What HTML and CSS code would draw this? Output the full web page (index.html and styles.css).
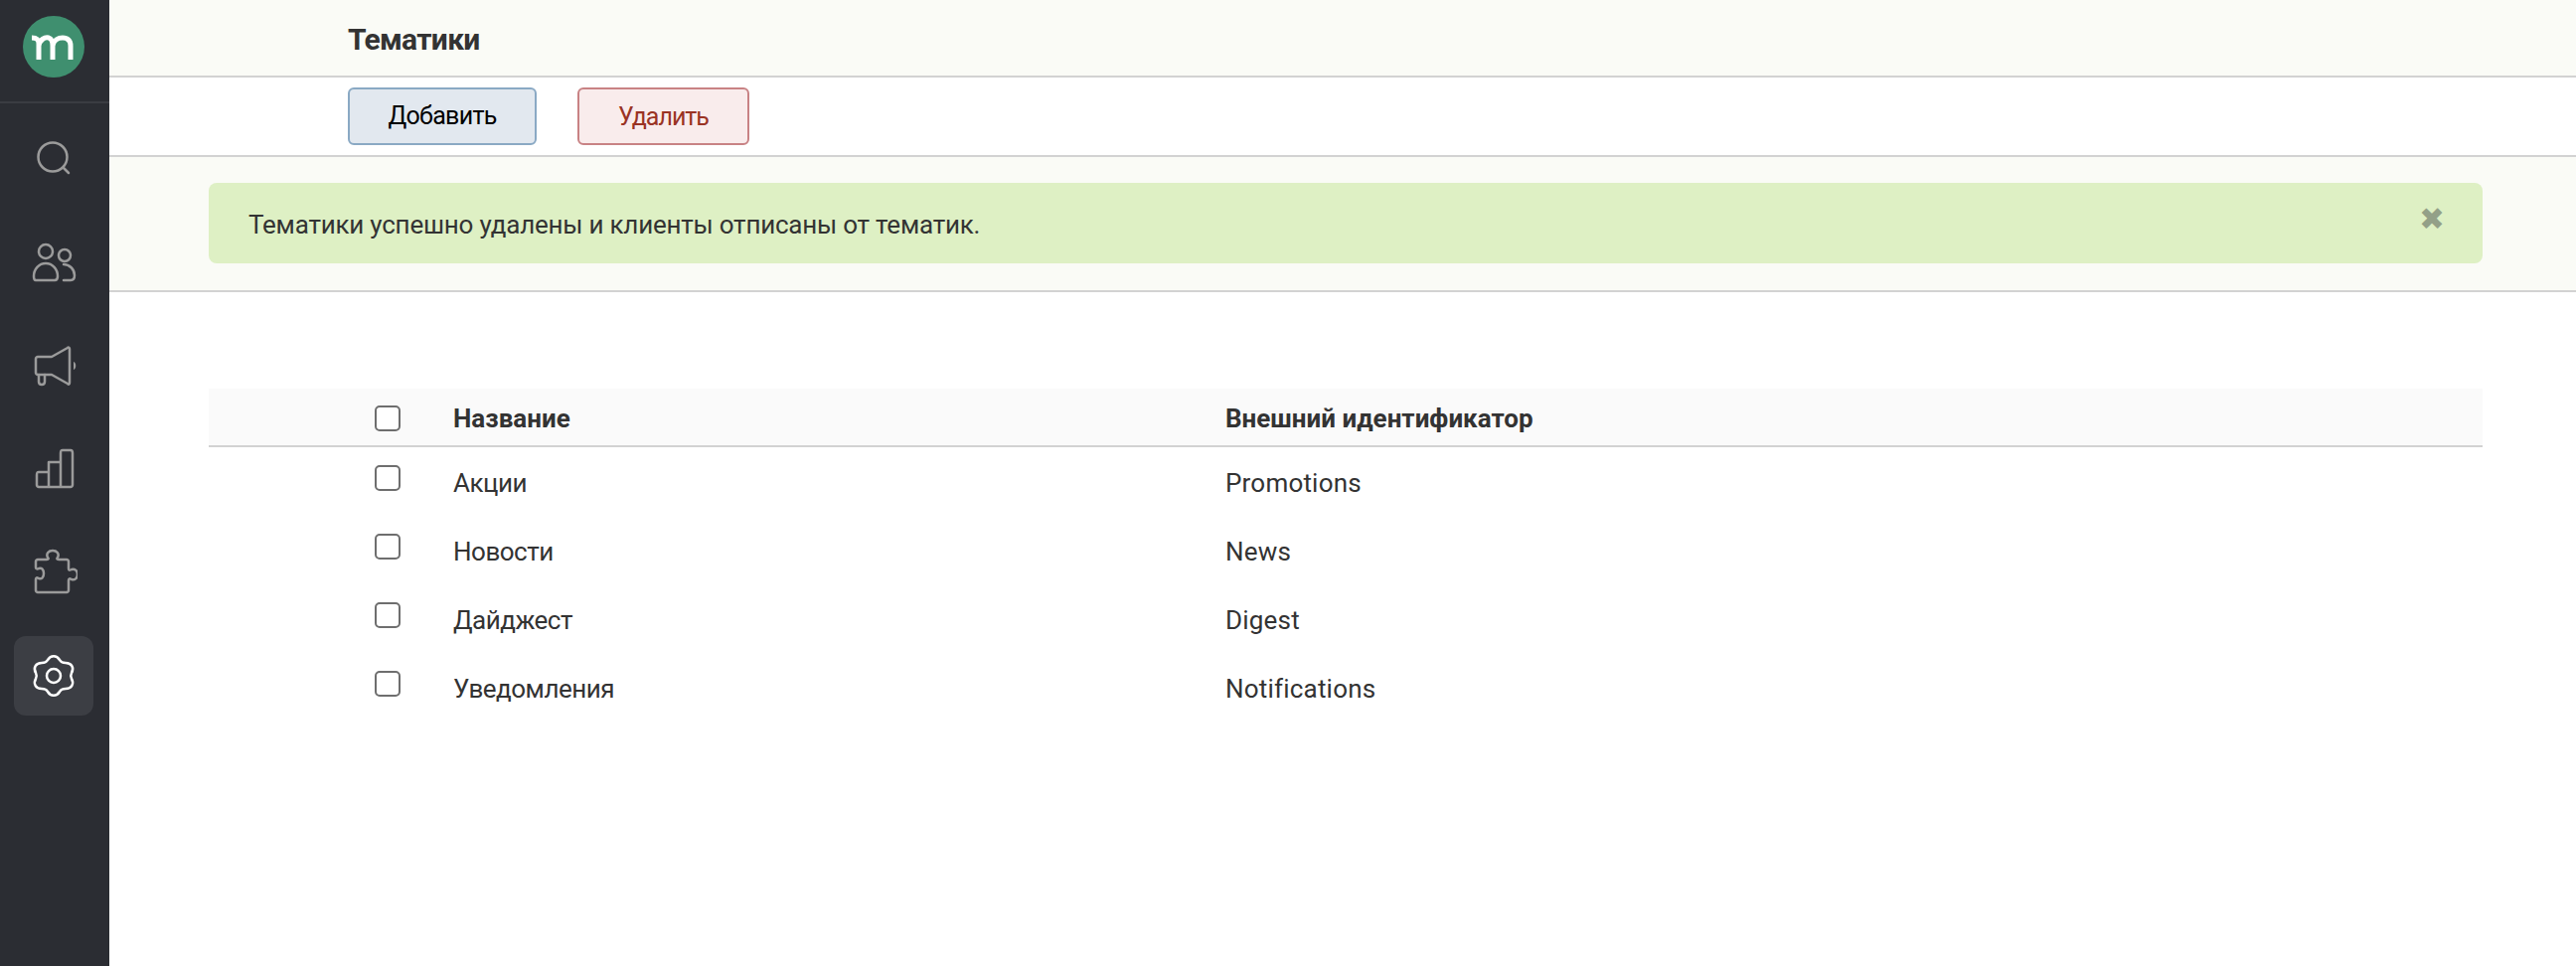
FILE: index.html
```html
<!DOCTYPE html>
<html>
<head>
    <title>Тематики</title>
    <meta charset="UTF-8">
    <link rel="stylesheet" href="styles.css">
</head>
<body>
    <aside class="sidebar">
        <div class="logo">
            <svg width="62" height="62" viewBox="0 0 62 62">
                <circle cx="31" cy="31" r="31" fill="#3f8f6f"/>
                <path d="M9 22c4 0 7 1 7 6v16M16 30c1-6 6-9 10-8 3 1 4 4 4 8v14M30 30c1-6 6-8 10-8 5 0 8 3 8 8v14" fill="none" stroke="#fff" stroke-width="5"/>
            </svg>
        </div>
        <nav class="nav">
            <a class="nav-item">
                <svg class="icon" viewBox="0 0 48 48">
                    <circle cx="23" cy="22" r="14.5"/>
                    <path d="M34 33l5 5"/>
                </svg>
            </a>
            <a class="nav-item">
                <svg class="icon" viewBox="0 0 48 48">
                    <circle cx="16" cy="13" r="7"/>
                    <circle cx="35" cy="17" r="6"/>
                    <path d="M6 42h19c3 0 3-2 3-4 0-7-5-13-12-13S4 31 4 38c0 2 0 4 2 4z"/>
                    <path d="M34 26c6 0 11 5 11 11 0 3-1 5-4 5h-7"/>
                </svg>
            </a>
            <a class="nav-item">
                <svg class="icon" viewBox="0 0 48 48">
                    <path d="M8 15h14L38 6c1-1 2 0 2 1v34c0 2-1 2-2 1L22 33H8c-1 0-2-1-2-2V17c0-1 1-2 2-2z"/>
                    <path d="M9 33v7c0 2 1 3 3 3s3-1 3-3v-7"/>
                    <path class="solid" d="M44 20c3 1 3 7 0 8z"/>
                </svg>
            </a>
            <a class="nav-item">
                <svg class="icon" viewBox="0 0 48 48">
                    <path d="M9 42h32c1 0 2-1 2-2V8c0-2-1-3-2-3h-8c-2 0-2 1-2 3v34M19 42V17h12M19 27H9c-2 0-2 1-2 3v10c0 1 1 2 2 2"/>
                </svg>
            </a>
            <a class="nav-item">
                <svg class="icon" viewBox="0 0 48 48">
                    <path d="M8 11h9c2 0 2-1 1-2-2-4 1-7 5-7s7 3 5 7c-1 1-1 2 1 2h8c1 0 2 1 2 2v7c0 2 1 2 3 1 3-1 6 1 6 5s-3 6-6 5c-2-1-3-1-3 1v10c0 1-1 2-2 2H8c-1 0-2-1-2-2V31c0-2 1-2 3-1 3 1 5-1 5-5s-2-6-5-5c-2 1-3 0-3-1v-6c0-1 1-2 2-2z"/>
                </svg>
            </a>
            <a class="nav-item active">
                <svg class="icon" viewBox="0 0 48 48">
                    <circle cx="24" cy="24" r="7"/>
                    <path d="M18 8c3-5 9-5 12 0 1 2 3 3 6 3 6 0 9 5 6 10-1 2-1 4 0 6 3 5 0 10-6 10-3 0-5 1-6 3-3 5-9 5-12 0-1-2-3-3-6-3-6 0-9-5-6-10 1-2 1-4 0-6-3-5 0-10 6-10 3 0 5-1 6-3z"/>
                </svg>
            </a>
        </nav>
    </aside>

    <main class="main">
        <header class="page-header">
            <h1>Тематики</h1>
        </header>

        <div class="toolbar">
            <button type="button" class="btn btn-add">Добавить</button>
            <button type="button" class="btn btn-delete">Удалить</button>
        </div>

        <div class="notice-bar">
            <div class="notice">
                <span class="notice-text">Тематики успешно удалены и клиенты отписаны от тематик.</span>
                <span class="notice-close">✖</span>
            </div>
        </div>

        <table class="topics">
            <tr>
                <th class="col-check"><input type="checkbox"></th>
                <th class="col-name">Название</th>
                <th>Внешний идентификатор</th>
            </tr>
            <tr>
                <td class="col-check"><input type="checkbox"></td>
                <td class="ru">Акции</td>
                <td class="en">Promotions</td>
            </tr>
            <tr>
                <td class="col-check"><input type="checkbox"></td>
                <td class="ru">Новости</td>
                <td class="en">News</td>
            </tr>
            <tr>
                <td class="col-check"><input type="checkbox"></td>
                <td class="ru">Дайджест</td>
                <td class="en">Digest</td>
            </tr>
            <tr>
                <td class="col-check"><input type="checkbox"></td>
                <td class="ru">Уведомления</td>
                <td class="en">Notifications</td>
            </tr>
        </table>
    </main>
</body>
</html>
```

FILE: styles.css
```css
html, body {
    height: 100%;
}

body {
    margin: 0;
    display: flex;
    font-family: "Roboto", "Liberation Sans", sans-serif;
    font-size: 26px;
    color: #333;
    background-color: #fff;
}

.sidebar {
    width: 110px;
    flex-shrink: 0;
    background-color: #2b2d33;
}

.logo {
    height: 104px;
    display: flex;
    justify-content: center;
    align-items: flex-start;
    padding: 16px 2px 0 0;
    box-sizing: border-box;
    border-bottom: 2px solid #3a3c42;
}

.nav {
    display: flex;
    flex-direction: column;
    align-items: center;
    gap: 24px;
    padding: 16px 2px 0 0;
}

.nav-item {
    width: 80px;
    height: 80px;
    display: flex;
    justify-content: center;
    align-items: center;
    border-radius: 12px;
}

.nav-item.active {
    background-color: #3c3e44;
}

.icon {
    width: 48px;
    height: 48px;
    fill: none;
    stroke: #9b9b9b;
    stroke-width: 2.5;
    stroke-linecap: round;
    stroke-linejoin: round;
}

.icon .solid {
    fill: #9b9b9b;
    stroke: none;
}

.active .icon {
    stroke: #fff;
}

.main {
    flex: 1;
    min-width: 0;
}

.page-header {
    height: 78px;
    box-sizing: border-box;
    padding: 3px 0 0 240px;
    display: flex;
    align-items: center;
    background-color: #fafbf6;
    border-bottom: 2px solid #d2d2d2;
}

h1 {
    margin: 0;
    font-size: 30px;
    font-weight: bold;
    letter-spacing: -0.7px;
}

.toolbar {
    height: 80px;
    box-sizing: border-box;
    padding-left: 240px;
    display: flex;
    align-items: center;
    gap: 41px;
    border-bottom: 2px solid #d2d2d2;
}

.btn {
    height: 58px;
    padding: 0;
    border-radius: 6px;
    font-family: inherit;
    font-size: 25px;
}

.btn-add {
    width: 190px;
    padding-bottom: 2px;
    color: #000;
    background-color: #e2e8ef;
    border: 2px solid #8aa9c4;
    letter-spacing: -0.7px;
}

.btn-delete {
    width: 173px;
    color: #9a3324;
    background-color: #f9ecec;
    border: 2px solid #c88284;
    letter-spacing: -1px;
}

.notice-bar {
    padding: 26px 94px 27px 100px;
    background-color: #fafbf6;
    border-bottom: 2px solid #d2d2d2;
}

.notice {
    height: 81px;
    padding: 0 38px 0 40px;
    display: flex;
    justify-content: space-between;
    align-items: center;
    background-color: #def0c4;
    border-radius: 8px;
}

.notice-text {
    padding-top: 2px;
    letter-spacing: -0.22px;
}

.notice-close {
    color: #93a088;
    font-family: "DejaVu Sans", sans-serif;
    font-size: 31px;
    line-height: 31px;
    position: relative;
    top: -4px;
}

.topics {
    width: 2288px;
    margin: 97px 0 0 100px;
    border-collapse: collapse;
}

.topics th {
    height: 55px;
    padding: 2px 0 0;
    text-align: left;
    background-color: #fafafa;
    border-bottom: 2px solid #d2d2d2;
}

.topics td {
    height: 67px;
    padding: 2px 0 0;
}

.topics td.ru {
    letter-spacing: -0.5px;
}

.topics td.en {
    letter-spacing: 0.2px;
}

.col-check {
    width: 246px;
}

.col-name {
    width: 777px;
}

.col-check input {
    appearance: none;
    display: block;
    box-sizing: border-box;
    width: 26px;
    height: 26px;
    margin: 0 0 10px 167px;
    background-color: #fff;
    border: 2px solid #6e6e6e;
    border-radius: 5px;
}

th.col-check input {
    margin-bottom: 0;
}
```
